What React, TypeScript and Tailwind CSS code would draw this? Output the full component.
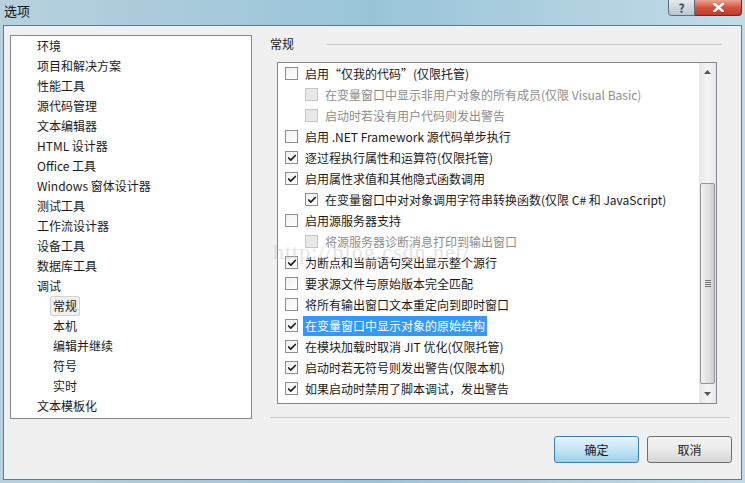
import { Check } from 'lucide-react';

const font = { fontFamily: '"Noto Sans CJK SC", "Noto Sans", sans-serif' };

const treeItems: { label: string; sub?: boolean; selected?: boolean }[] = [
  { label: '环境' },
  { label: '项目和解决方案' },
  { label: '性能工具' },
  { label: '源代码管理' },
  { label: '文本编辑器' },
  { label: 'HTML 设计器' },
  { label: 'Office 工具' },
  { label: 'Windows 窗体设计器' },
  { label: '测试工具' },
  { label: '工作流设计器' },
  { label: '设备工具' },
  { label: '数据库工具' },
  { label: '调试' },
  { label: '常规', sub: true, selected: true },
  { label: '本机', sub: true },
  { label: '编辑并继续', sub: true },
  { label: '符号', sub: true },
  { label: '实时', sub: true },
  { label: '文本模板化' },
];

type Opt = { label: string; checked?: boolean; indent?: boolean; disabled?: boolean; highlight?: boolean };

const options: Opt[] = [
  { label: '启用“仅我的代码”(仅限托管)' },
  { label: '在变量窗口中显示非用户对象的所有成员(仅限 Visual Basic)', indent: true, disabled: true },
  { label: '启动时若没有用户代码则发出警告', indent: true, disabled: true },
  { label: '启用 .NET Framework 源代码单步执行' },
  { label: '逐过程执行属性和运算符(仅限托管)', checked: true },
  { label: '启用属性求值和其他隐式函数调用', checked: true },
  { label: '在变量窗口中对对象调用字符串转换函数(仅限 C# 和 JavaScript)', checked: true, indent: true },
  { label: '启用源服务器支持' },
  { label: '将源服务器诊断消息打印到输出窗口', indent: true, disabled: true },
  { label: '为断点和当前语句突出显示整个源行', checked: true },
  { label: '要求源文件与原始版本完全匹配' },
  { label: '将所有输出窗口文本重定向到即时窗口' },
  { label: '在变量窗口中显示对象的原始结构', checked: true, highlight: true },
  { label: '在模块加载时取消 JIT 优化(仅限托管)', checked: true },
  { label: '启动时若无符号则发出警告(仅限本机)', checked: true },
  { label: '如果启动时禁用了脚本调试，发出警告', checked: true },
];

function CheckBox({ checked, disabled }: { checked?: boolean; disabled?: boolean }) {
  return (
    <div
      className={
        'w-[13px] h-[13px] border flex items-center justify-center shrink-0 ' +
        (disabled
          ? 'border-[#c6c6c6] bg-[#e8e8e8]'
          : 'border-[#8e8f8f] bg-gradient-to-br from-[#f0f0f0] to-white')
      }
    >
      {checked && <Check className="w-[10px] h-[10px] text-[#1a1a1a]" strokeWidth={4} />}
    </div>
  );
}

export default function App() {
  return (
    <div className="w-[745px] h-[483px] flex flex-col bg-gradient-to-r from-[#b7d1de] via-[#99c4d8] to-[#c3dce7] px-[3px] pb-[3px] overflow-hidden" style={font}>
      {/* title bar */}
      <div className="h-[25px] flex items-start justify-between shrink-0">
        <div className="pl-[1px] pt-[2px] text-[13px] leading-[18px] text-[#111]">选项</div>
        <div className="flex">
          <div className="w-[27px] h-[16px] rounded-bl-[4px] border border-t-0 border-[#5c6f7d] bg-gradient-to-b from-[#e4ebf0] to-[#b9c6d0] flex items-center justify-center text-[12px] leading-none text-[#3b4a55] font-bold">?</div>
          <div className="w-[47px] h-[16px] rounded-br-[4px] border border-t-0 border-l-0 border-[#6b2a22] bg-gradient-to-b from-[#e8a493] via-[#d2543e] to-[#c2371f] flex items-center justify-center">
            <svg width="11" height="9" viewBox="0 0 11 9">
              <path d="M1 0.5 L10 8.5 M10 0.5 L1 8.5" stroke="#fff" strokeWidth="2.4" strokeLinecap="square" />
            </svg>
          </div>
        </div>
      </div>

      {/* client area */}
      <div className="flex-1 bg-[#f0f0f0] border border-[#5e7b8f] flex flex-col pt-[9px] pl-[6px] pr-[9px] text-[12px] text-[#1a1a1a]">
        <div className="flex h-[384px]">
          {/* tree */}
          <div className="w-[242px] h-full bg-white border border-[#828790]">
            {treeItems.map((it) => (
              <div key={it.label} className={'h-[20px] flex items-center ' + (it.sub ? 'pl-[41px]' : 'pl-[25px]')}>
                <span
                  className={
                    'leading-[18px] px-[2px] -ml-[2px] ' +
                    (it.selected ? 'bg-[#f0f0f0] border border-[#d3d3d3] rounded-[2px]' : 'border border-transparent')
                  }
                >
                  {it.label}
                </span>
              </div>
            ))}
          </div>

          {/* right column */}
          <div className="ml-[18px] w-[460px] flex flex-col">
            <div className="h-[18px] flex items-center pr-[8px]">
              <span>常规</span>
              <div className="ml-[33px] flex-1 h-px bg-[#c8c8c8]" />
            </div>
            <div className="mt-[9px] ml-[7px] w-[440px] h-[342px] bg-white border border-[#828790] flex relative">
              <div className="flex-1">
                {options.map((o) => (
                  <div key={o.label} className={'h-[21px] flex items-center ' + (o.indent ? 'pl-[27px]' : 'pl-[7px]')}>
                    <CheckBox checked={o.checked} disabled={o.disabled} />
                    <span
                      className={
                        'ml-[5px] px-[2px] h-[20px] leading-[20px] whitespace-nowrap ' +
                        (o.highlight ? 'bg-[#3399ff] text-white' : o.disabled ? 'text-[#8d8d8d]' : '')
                      }
                    >
                      {o.label}
                    </span>
                  </div>
                ))}
              </div>
              {/* scrollbar */}
              <div className="w-[17px] h-full bg-gradient-to-r from-[#e8e8e8] via-[#f5f5f5] to-[#e8e8e8] flex flex-col">
                <div className="h-[17px] flex items-center justify-center">
                  <svg width="7" height="4" viewBox="0 0 7 4"><path d="M0 4 L3.5 0 L7 4 Z" fill="#555" /></svg>
                </div>
                <div className="h-[103px]" />
                <div className="h-[201px] mx-[1px] rounded-[2px] border border-[#959595] bg-gradient-to-r from-[#f2f2f2] via-[#e2e2e2] to-[#cfcfcf] flex items-center justify-center">
                  <div className="flex flex-col gap-[1px]">
                    <div className="w-[6px] h-px bg-[#777]" />
                    <div className="w-[6px] h-px bg-[#777]" />
                    <div className="w-[6px] h-px bg-[#777]" />
                    <div className="w-[6px] h-px bg-[#777]" />
                  </div>
                </div>
                <div className="flex-1 flex items-center justify-center">
                  <svg width="7" height="4" viewBox="0 0 7 4"><path d="M0 0 L3.5 4 L7 0 Z" fill="#555" /></svg>
                </div>
              </div>
              {/* watermark */}
              <div
                className="absolute left-[-5px] top-[178px] text-[22px] leading-none text-[#c8c8c8]/50 tracking-[1px] pointer-events-none whitespace-nowrap"
                style={{ fontFamily: '"Liberation Serif", serif' }}
              >
                http://blog.csdn.net/
              </div>
            </div>
            <div className="mt-[13px] h-px bg-[#c8c8c8]" />
          </div>
        </div>

        {/* buttons */}
        <div className="mt-[17px] flex justify-end gap-[8px]">
          <button className="w-[85px] h-[27px] rounded-[3px] border border-[#3c7fb1] bg-gradient-to-b from-[#e5f4fc] via-[#c4e5f6] to-[#98d1ef] text-[12px] text-[#1a1a1a]">确定</button>
          <button className="w-[85px] h-[27px] rounded-[3px] border border-[#707070] bg-gradient-to-b from-[#f2f2f2] via-[#ebebeb] to-[#d5d5d5] text-[12px] text-[#1a1a1a]">取消</button>
        </div>
      </div>
    </div>
  );
}
